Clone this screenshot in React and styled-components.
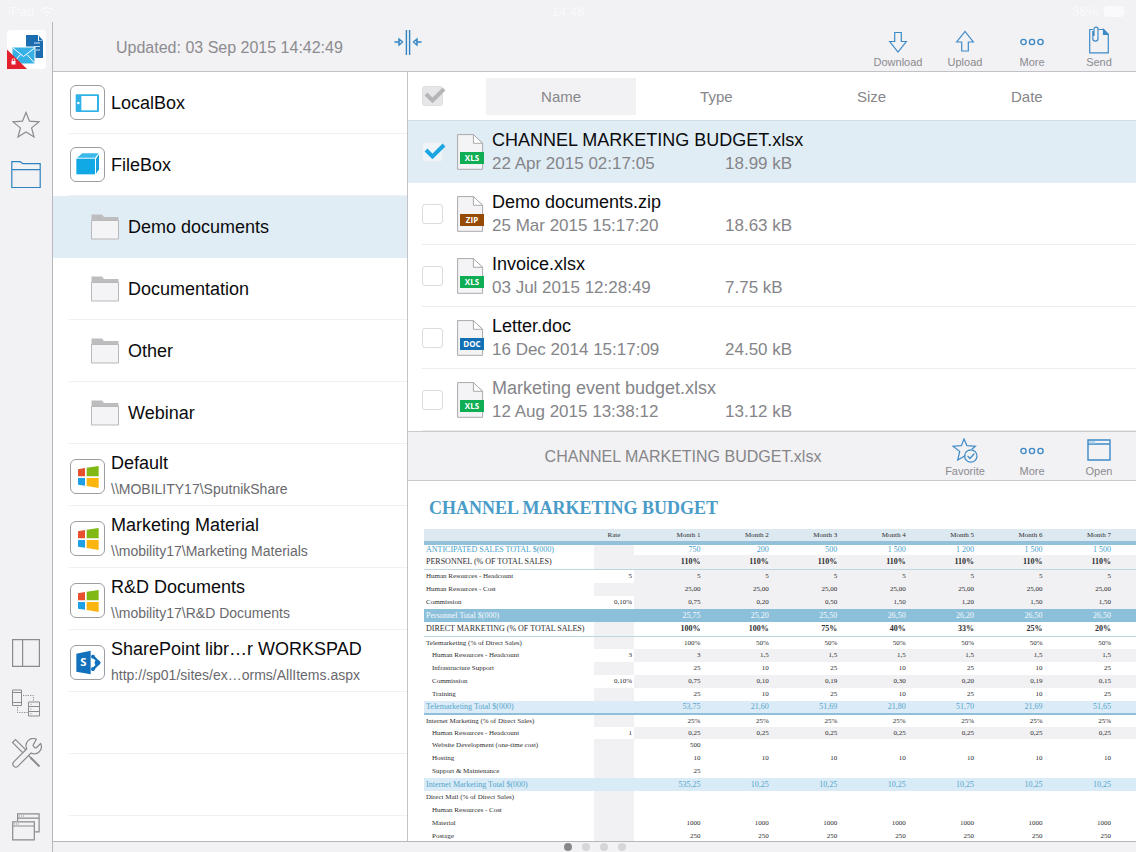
import React, { useState } from "react";
import styled, { createGlobalStyle } from "styled-components";

const GlobalStyle = createGlobalStyle`
  * {
    box-sizing: border-box;
  }
  body {
    margin: 0;
    background: #f2f1f4;
    color: #0b0b0d;
    font-family: "Liberation Sans", Arial, sans-serif;
  }
  button {
    margin: 0;
    padding: 0;
    border: none;
    background: none;
    color: inherit;
    font: inherit;
    cursor: pointer;
  }
  svg {
    display: block;
    flex: none;
  }
`;

// page frame
const Page = styled.div`
  display: flex;
  flex-direction: column;
  height: 100vh;
  overflow: hidden;
  background: #f2f1f4;
`;

const StatusBar = styled.div`
  display: grid;
  grid-template-columns: 1fr auto 1fr;
  align-items: center;
  flex: none;
  height: 22px;
  padding: 0 8px;
  color: #faf9fc;
  font-size: 13px;
`;

const StatusSide = styled.div`
  display: flex;
  align-items: center;
  gap: 6px;
  justify-content: ${(props) => props.$align || "flex-start"};
`;

const Body = styled.div`
  display: flex;
  flex: 1;
  min-height: 0;
`;

// left rail
const Rail = styled.nav`
  display: flex;
  flex-direction: column;
  align-items: center;
  flex: none;
  width: 53px;
  padding-top: 8px;
  border-right: 1px solid #b7b6ba;
`;

const LogoBox = styled.a`
  display: block;
  margin: 0 0 31px;
`;

const RailButton = styled.button`
  display: flex;
  align-items: center;
  justify-content: center;
  width: 52px;
  height: 50px;
  color: ${(props) => (props.$active ? "#2f83c0" : "#8b8b8f")};
`;

const RailBottom = styled.div`
  display: flex;
  flex-direction: column;
  margin-top: auto;
  & > :last-child {
    margin-top: 24px;
  }
`;

const Main = styled.main`
  display: flex;
  flex-direction: column;
  flex: 1;
  min-width: 0;
`;

// toolbar over both panels
const Toolbar = styled.header`
  display: flex;
  align-items: center;
  flex: none;
  height: 50px;
  padding-right: 4px;
  border-bottom: 1px solid #c3c2c6;
`;

const Updated = styled.p`
  width: 341px;
  margin: 0;
  padding: 2px 0 0 63px;
  color: #8c8c90;
  font-size: 16px;
`;

const SplitButton = styled.button`
  margin-bottom: 8px;
  color: #2f83c0;
`;

const Tools = styled.div`
  display: flex;
  gap: 1px;
  margin-left: auto;
`;

const ToolButton = styled.button`
  display: flex;
  flex-direction: column;
  align-items: center;
  justify-content: flex-end;
  gap: 2px;
  width: 66px;
  height: 42px;
  color: #8b8b8f;
  font-size: 11px;
  line-height: 12px;
  svg {
    color: #3e8ac6;
  }
`;

const Panels = styled.div`
  display: flex;
  flex: 1;
  min-height: 0;
  background: #fff;
`;

// folder list
const FolderList = styled.ul`
  flex: none;
  width: 355px;
  margin: 0;
  padding: 0;
  overflow: hidden;
  list-style: none;
  border-right: 1px solid #c3c2c6;
`;

const FolderRow = styled.li`
  height: 62px;
  padding-left: 16px;
  background: ${(props) => (props.$selected ? "#e1edf5" : "transparent")};
`;

const FolderButton = styled.button`
  display: flex;
  align-items: center;
  gap: ${(props) => (props.$nested ? "9px" : "6px")};
  width: 100%;
  height: 62px;
  padding-top: ${(props) => (props.$tall ? "3px" : "0")};
  padding-left: ${(props) => (props.$nested ? "22px" : "1px")};
  border-bottom: 1px solid ${(props) => (props.$selected ? "#e1edf5" : "#f0f0f3")};
  text-align: left;
`;

const EmptyRow = styled.div`
  height: 62px;
  border-bottom: 1px solid #f0f0f3;
`;

const SourceIcon = styled.span`
  width: 35px;
  height: 35px;
  border: 1px solid #9d9da1;
  border-radius: 6px;
  background: #fff;
`;

const FolderText = styled.span`
  display: flex;
  flex-direction: column;
  gap: 2px;
  font-size: 18px;
  line-height: 24px;
  small {
    color: #69696d;
    font-size: 14px;
  }
`;

// file list
const Content = styled.div`
  display: flex;
  flex-direction: column;
  flex: 1;
  min-width: 0;
`;

const SortBar = styled.div`
  display: flex;
  align-items: center;
  flex: none;
  height: 49px;
  padding: 0 34px 0 14px;
  border-bottom: 1px solid #cfdfe8;
`;

const SortTabs = styled.div`
  display: flex;
  flex: 1;
  gap: 5px;
  margin-left: 43px;
`;

const SortTab = styled.button`
  flex: 1;
  height: 37px;
  background: ${(props) => (props.$active ? "#f2f1f3" : "transparent")};
  color: #868689;
  font-size: 15px;
`;

const CheckLabel = styled.label`
  position: relative;
  display: block;
  flex: none;
  width: 21px;
  height: 20px;
  svg {
    position: absolute;
    top: 0;
    left: 2px;
    pointer-events: none;
  }
`;

const CheckInput = styled.input`
  appearance: none;
  display: block;
  width: 21px;
  height: 20px;
  margin: 0;
  border: 1px solid ${(props) => (props.$all ? "#dfdfe1" : "#dcdce0")};
  border-radius: 3px;
  background: ${(props) => (props.$all ? "#e6e6e8" : "#fff")};
  &:checked {
    border-color: #e6eef4;
    background: ${(props) => (props.$all ? "#e6e6e8" : "#eef4f8")};
  }
`;

const FileList = styled.ul`
  flex: none;
  margin: 0;
  padding: 0;
  list-style: none;
`;

const FileRow = styled.li`
  height: 62px;
  padding-left: 14px;
  background: ${(props) => (props.$selected ? "#e1edf5" : "transparent")};
`;

const FileInner = styled.div`
  display: flex;
  align-items: center;
  height: 62px;
  border-bottom: 1px solid ${(props) => (props.$selected ? "#e1edf5" : "#ededf0")};
  & > svg {
    margin: 0 7px 0 14px;
  }
`;

const FileText = styled.div`
  flex: 1;
  min-width: 0;
  line-height: 24px;
`;

const FileName = styled.div`
  color: ${(props) => (props.$dim ? "#858589" : "inherit")};
  font-size: 18px;
`;

const FileMeta = styled.div`
  display: grid;
  grid-template-columns: 233px 1fr;
  color: #858589;
  font-size: 17px;
`;

// preview panel
const PreviewBar = styled.div`
  display: flex;
  align-items: center;
  flex: none;
  height: 50px;
  padding-right: 4px;
  border-top: 1px solid #cbcacf;
  border-bottom: 1px solid #c9c8cc;
  background: #f2f1f4;
`;

const PreviewTitle = styled.h2`
  flex: 1;
  margin: 0;
  padding: 2px 0 0 26px;
  color: #868689;
  font-size: 16px;
  font-weight: 400;
  text-align: center;
`;

const SheetArea = styled.section`
  flex: 1;
  min-height: 0;
  padding: 16px 0 0 16px;
  overflow: hidden;
  font-family: "Liberation Serif", "Times New Roman", serif;
`;

const SheetTitle = styled.h1`
  margin: 0 0 10px 5px;
  color: #4a9cc8;
  font-size: 18px;
  line-height: 22px;
`;

const Sheet = styled.table`
  width: 100%;
  border-collapse: separate;
  border-spacing: 0;
  table-layout: fixed;
  color: #2d2d30;
  font-size: 7px;
  line-height: 8px;
`;

const LabelCol = styled.col`
  width: 170px;
`;
const RateCol = styled.col`
  width: 40px;
`;
const EdgeCol = styled.col`
  width: 23px;
`;

const rowKinds = {
  head: { height: 16, fill: "#dce9f0", line: "4px solid #93c1da" },
  sales: { height: 10, color: "#45a0cb", size: 8 },
  section: { height: 15, line: "1px solid #bcd6e2", size: 8 },
  plain: { height: 13 },
  tight: { height: 12 },
  total: { height: 13, fill: "#8cc0da", color: "#f4fafd", size: 8 },
  subtotal: { height: 14, fill: "#dbebf7", color: "#55a6cc", line: "2px solid #8fbfd9", size: 8 },
  soft: { height: 13, fill: "#d9ebf6", color: "#55a6cc", size: 8 },
};

const SheetRow = styled.tr`
  height: ${(props) => rowKinds[props.$kind].height}px;
  color: ${(props) => rowKinds[props.$kind].color || "inherit"};
  font-size: ${(props) => rowKinds[props.$kind].size || 7}px;
  th,
  td {
    padding: 0 2px ${(props) => (props.$kind === "plain" ? 2 : 0)}px;
    border-bottom: ${(props) => rowKinds[props.$kind].line || "none"};
    background: ${(props) => rowKinds[props.$kind].fill || "transparent"};
    font-weight: 400;
    text-align: right;
    white-space: nowrap;
  }
  th:first-child {
    padding-left: ${(props) => (props.$indent ? 8 : 2)}px;
    text-align: left;
  }
`;

const Cell = styled.td`
  && {
    ${(props) => props.$shade && "background: #f1f0f2;"}
    ${(props) => props.$bold && "font-weight: 700;"}
  }
`;

const RateHead = styled.th`
  && {
    text-align: center;
  }
`;

const Footer = styled.footer`
  display: flex;
  align-items: center;
  justify-content: center;
  gap: 10px;
  flex: none;
  height: 11px;
  border-top: 1px solid #b7b6ba;
`;

const Dot = styled.span`
  width: 8px;
  height: 8px;
  border-radius: 50%;
  background: ${(props) => (props.$active ? "#87868a" : "#d6d5d9")};
`;

// icons
const Line = ({ w, h, children, sw = 1.2 }) => (
  <svg
    width={w}
    height={h}
    viewBox={`0 0 ${w} ${h}`}
    fill="none"
    stroke="currentColor"
    strokeWidth={sw}
    aria-hidden="true"
  >
    {children}
  </svg>
);

const Logo = () => (
  <svg width="39" height="39" viewBox="0 0 39 39" aria-hidden="true">
    <rect width="39" height="39" rx="4" fill="#fff" />
    <path d="M19 5h12l5 6v17H19z" fill="#1c6db0" />
    <path d="M31 5v6h5z" fill="#fff" />
    <path d="M32 6l4 4.500h-4z" fill="#1c6db0" />
    <path d="M27 13h6M27 16.500h6M29 20h4" stroke="#cfe3f2" strokeWidth="1" />
    <path d="M5 17h23v17H5z" fill="#35b1e6" stroke="#fff" strokeWidth="1" />
    <path d="M6 18l10.500 8.500L27.500 18M6 33l7.500-8.500M27.500 33L20 24.500" stroke="#fff" fill="none" />
    <path d="M0 19.500L20 39H0z" fill="#e3202e" />
    <rect x="4.500" y="31" width="4" height="3.500" fill="#fff" />
    <path d="M5.200 31v-1a1.300 1.300 0 0 1 2.600 0v1" stroke="#fff" strokeWidth=".8" fill="none" />
  </svg>
);

const StarIcon = () => (
  <Line w={28} h={28}>
    <path d="M14 1.500l3.500 8.700 9.500.7-7.400 6 2.400 9.100-8-5-8 5 2.400-9.100-7.400-6 9.500-.7z" />
  </Line>
);

const FolderIcon = () => (
  <Line w={30} h={28}>
    <path d="M.8 26.500V.7h8.400l2.600 2h17.400v23.800zM.8 8.700h28.400" />
  </Line>
);

const ColumnsIcon = () => (
  <Line w={28} h={28}>
    <path d="M.6.600h26.800v26.800H.6zM10.600.600v26.800" />
  </Line>
);

const DevicesIcon = () => (
  <Line w={28} h={28} sw={1}>
    <path d="M.5 1h9v15.500h-9zM.5 3.500h9M.5 13.500h9" />
    <path d="M16.500 13h11v14h-11zM16.500 17.500h11M16.500 22.500h11" />
    <path d="M18.500 15.300h1M18.500 20h1M18.500 24.800h1" />
    <path d="M11 6.500h10.500V12M5.500 18v5.500h10" strokeDasharray="1.200 1.200" />
  </Line>
);

const ToolsIcon = () => (
  <Line w={31} h={31} sw={1.2}>
    <path d="M1.500 4.500l3-3L16 13l-3 3z" />
    <path d="M17 17l5 5" />
    <path d="M19.500 19.500l9 9" strokeWidth="2" />
    <path
      transform="translate(-2.600 -2.600) scale(1.420)"
      strokeWidth=".85"
      fill="#f2f1f4"
      d="M17.700 6.300a1 1 0 0 0 0 1.400l.8.8a1 1 0 0 0 1.400 0l2.770-2.770a5 5 0 0 1-6.700 6.700l-9.200 9.200a2.120 2.120 0 0 1-3-3l9.200-9.200a5 5 0 0 1 6.700-6.700z"
    />
  </Line>
);

const WindowsIcon = () => (
  <Line w={28} h={28}>
    <path d="M5.600 8V.8h21.500v18H23M5.600 5.200h21.500" />
    <path d="M.7 8.800h21.600v18H.7zM.7 13h21.600" />
    <path d="M7 3h6M2 11h6" strokeDasharray="1 1" />
  </Line>
);

const SplitIcon = () => (
  <Line w={28} h={25} sw={1.4}>
    <path d="M12.400 0v25M15.600 0v25" />
    <path d="M.5 12h4M5 9l3.500 3L5 15zM27.500 12h-4M23 9l-3.500 3 3.500 3z" />
  </Line>
);

const DownloadIcon = () => (
  <Line w={20} h={24}>
    <path d="M6.700 2.500h6.600v9h5L10 22 1.700 11.500h5z" />
  </Line>
);

const UploadIcon = () => (
  <Line w={20} h={24}>
    <path d="M6.700 21h6.600v-9h5L10 1.500 1.700 12h5z" />
  </Line>
);

const MoreIcon = () => (
  <Line w={24} h={24} sw={1.400}>
    <circle cx="3.500" cy="12" r="2.600" />
    <circle cx="12" cy="12" r="2.600" />
    <circle cx="20.500" cy="12" r="2.600" />
  </Line>
);

const SendIcon = () => (
  <Line w={20} h={28}>
    <path d="M4 3.500H.7v23.400h18.600V8.500L14.500 3.500H9.500" />
    <path d="M14.500 3.500v5h4.800z" fill="currentColor" />
    <path d="M3.800 5v7.500a2.600 2.600 0 0 0 5.200 0V3.200a2 2 0 0 0-4-.2v7" />
  </Line>
);

const FavoriteIcon = () => (
  <Line w={26} h={25}>
    <path d="M13.500 17.500L5.700 22l2-8.600L1 8.200l8.400-.6L12 1l2.900 6.600 8.400.6-3.500 3" />
    <circle cx="18.800" cy="18" r="6.200" />
    <path d="M15.600 18l2.400 2.500 4.400-5" />
  </Line>
);

const OpenIcon = () => (
  <Line w={24} h={24} sw={1.400}>
    <path d="M1 1h22v20H1zM1 5h22" />
    <path d="M2 2h6v2.400H2z" fill="#b9d6ec" stroke="none" />
  </Line>
);

const CheckMark = ({ color }) => (
  <svg width="22" height="18" viewBox="0 0 22 18" aria-hidden="true">
    <path d="M2 8l6.500 6.500L20 3" fill="none" stroke={color} strokeWidth="4" />
  </svg>
);

const SmallFolder = () => (
  <svg width="28" height="26" viewBox="0 0 28 26" aria-hidden="true">
    <path d="M.5 25V.5h10.500l2 2.500h14.500v22z" fill="#bdbdbf" />
    <path d="M.5 6.500h27v18.500H.5z" fill="#f4f3f5" stroke="#b9b9bb" />
  </svg>
);

const badgeColors = { XLS: "#0fae54", ZIP: "#954a05", DOC: "#1470b4" };

const FileIcon = ({ type }) => (
  <svg width="28" height="36" viewBox="0 0 28 36" role="img" aria-label={type}>
    <path d="M.6.600h15.800l9.200 8.700v26H.6z" fill="#f4f4f6" stroke="#a9a9ad" />
    <path d="M16.400.600v8.700h9.200z" fill="#fff" stroke="#a9a9ad" />
    <rect x="3" y="18" width="24" height="12" fill={badgeColors[type]} />
    <text
      x="15"
      y="27"
      fill="#fff"
      fontFamily="Open Sans, sans-serif"
      fontSize="8"
      fontWeight="700"
      textAnchor="middle"
    >
      {type}
    </text>
  </svg>
);

const SourceArt = ({ kind }) => (
  <svg width="33" height="33" viewBox="3 3 99 99" aria-hidden="true">
    {kind === "tablet" && (
      <>
        <rect x="17" y="28" width="70" height="53" rx="3" fill="#2fb3e6" />
        <rect x="34" y="33" width="47" height="43" fill="#fff" />
        <circle cx="25" cy="54" r="4" fill="#fff" />
      </>
    )}
    {kind === "cube" && (
      <>
        <path d="M19 35h56v47H19z" fill="#10a9e6" />
        <path d="M21 32l16-13h49L75 32z" fill="#3bb9ea" />
        <path d="M78 35l9-13v45l-9 13z" fill="#1aa0dc" />
      </>
    )}
    {kind === "windows" && (
      <>
        <path d="M24 31l21-4v25H24z" fill="#e8502d" />
        <path d="M50 26l36-5v31H50z" fill="#80b816" />
        <path d="M24 57h21v23l-21-3z" fill="#1f9fe4" />
        <path d="M50 57h36v30l-36-6z" fill="#fbb50f" />
      </>
    )}
    {kind === "sharepoint" && (
      <>
        <path d="M66 31l22 22-22 23" fill="none" stroke="#1370bc" strokeWidth="7" />
        <circle cx="69" cy="35" r="6" fill="#1370bc" />
        <circle cx="69" cy="72" r="6" fill="#1370bc" />
        <circle cx="82" cy="53" r="8" fill="#1370bc" />
        <path d="M19 26l43-9v71l-43-8z" fill="#1370bc" />
        <text x="40" y="64" fill="#fff" fontFamily="Open Sans, sans-serif" fontSize="34" fontWeight="700" textAnchor="middle">
          S
        </text>
      </>
    )}
  </svg>
);

const folders = [
  { name: "LocalBox", icon: "tablet" },
  { name: "FileBox", icon: "cube" },
  { name: "Demo documents", nested: true },
  { name: "Documentation", nested: true },
  { name: "Other", nested: true },
  { name: "Webinar", nested: true },
  { name: "Default", path: "\\\\MOBILITY17\\SputnikShare", icon: "windows" },
  { name: "Marketing Material", path: "\\\\mobility17\\Marketing Materials", icon: "windows" },
  { name: "R&D Documents", path: "\\\\mobility17\\R&D Documents", icon: "windows" },
  { name: "SharePoint libr…r WORKSPAD", path: "http://sp01/sites/ex…orms/AllItems.aspx", icon: "sharepoint" },
];

const files = [
  { name: "CHANNEL MARKETING BUDGET.xlsx", date: "22 Apr 2015 02:17:05", size: "18.99 kB", type: "XLS" },
  { name: "Demo documents.zip", date: "25 Mar 2015 15:17:20", size: "18.63 kB", type: "ZIP" },
  { name: "Invoice.xlsx", date: "03 Jul 2015 12:28:49", size: "7.75 kB", type: "XLS" },
  { name: "Letter.doc", date: "16 Dec 2014 15:17:09", size: "24.50 kB", type: "DOC" },
  { name: "Marketing event budget.xlsx", date: "12 Aug 2015 13:38:12", size: "13.12 kB", type: "XLS", dim: true },
];

const same = (value) => Array(7).fill(value);

// shade: "r" fills the rate cell, "m" fills the month cells
const sheetRows = [
  { kind: "sales", label: "ANTICIPATED SALES TOTAL $(000)", shade: "r", months: ["750", "200", "500", "1 500", "1 200", "1 500", "1 500"] },
  { kind: "section", label: "PERSONNEL (% OF TOTAL SALES)", shade: "rm", bold: true, months: same("110%") },
  { kind: "plain", label: "Human Resources - Headcount", rate: "5", shade: "m", months: same("5") },
  { kind: "plain", label: "Human Resources - Cost", shade: "rm", months: same("25,00") },
  { kind: "plain", label: "Commission", rate: "0,10%", shade: "m", months: ["0,75", "0,20", "0,50", "1,50", "1,20", "1,50", "1,50"] },
  { kind: "total", label: "Personnel Total $(000)", months: ["25,75", "25,20", "25,50", "26,50", "26,20", "26,50", "26,50"] },
  { kind: "section", label: "DIRECT MARKETING (% OF TOTAL SALES)", shade: "r", bold: true, months: ["100%", "100%", "75%", "40%", "33%", "25%", "20%"] },
  { kind: "tight", label: "Telemarketing (% of Direct Sales)", shade: "r", months: ["100%", "50%", "50%", "50%", "50%", "50%", "50%"] },
  { kind: "plain", indent: true, label: "Human Resources - Headcount", rate: "3", shade: "m", months: ["3", "1,5", "1,5", "1,5", "1,5", "1,5", "1,5"] },
  { kind: "plain", indent: true, label: "Infrastructure Support", shade: "r", months: ["25", "10", "25", "10", "25", "10", "25"] },
  { kind: "plain", indent: true, label: "Commission", rate: "0,10%", shade: "m", months: ["0,75", "0,10", "0,19", "0,30", "0,20", "0,19", "0,15"] },
  { kind: "plain", indent: true, label: "Training", shade: "r", months: ["25", "10", "25", "10", "25", "10", "25"] },
  { kind: "subtotal", label: "Telemarketing Total $(000)", months: ["53,75", "21,60", "51,69", "21,80", "51,70", "21,69", "51,65"] },
  { kind: "tight", label: "Internet Marketing (% of Direct Sales)", shade: "r", months: same("25%") },
  { kind: "tight", indent: true, label: "Human Resources - Headcount", rate: "1", shade: "m", months: same("0,25") },
  { kind: "plain", indent: true, label: "Website Development (one-time cost)", shade: "r", months: ["500", "", "", "", "", "", ""] },
  { kind: "plain", indent: true, label: "Hosting", shade: "r", months: same("10") },
  { kind: "plain", indent: true, label: "Support & Maintenance", shade: "r", months: ["25", "", "", "", "", "", ""] },
  { kind: "soft", label: "Internet Marketing Total $(000)", months: ["535,25", "10,25", "10,25", "10,25", "10,25", "10,25", "10,25"] },
  { kind: "plain", label: "Direct Mail (% of Direct Sales)", shade: "r", months: same("") },
  { kind: "plain", indent: true, label: "Human Resources - Cost", shade: "r", months: same("") },
  { kind: "plain", indent: true, label: "Material", shade: "r", months: same("1000") },
  { kind: "plain", indent: true, label: "Postage", shade: "r", months: same("250") },
];

const BudgetSheet = () => (
  <SheetArea>
    <SheetTitle>CHANNEL MARKETING BUDGET</SheetTitle>
    <Sheet>
      <colgroup>
        <LabelCol />
        <RateCol />
        {same(0).map((_, i) => (
          <col key={i} />
        ))}
        <EdgeCol />
      </colgroup>
      <thead>
        <SheetRow $kind="head">
          <th />
          <RateHead>Rate</RateHead>
          {same(0).map((_, i) => (
            <th key={i}>{`Month ${i + 1}`}</th>
          ))}
          <th />
        </SheetRow>
      </thead>
      <tbody>
        {sheetRows.map((row, index) => {
          const shade = row.shade || "";
          return (
            <SheetRow key={index} $kind={row.kind} $indent={row.indent}>
              <th scope="row">{row.label}</th>
              <Cell $shade={shade.includes("r")}>{row.rate}</Cell>
              {row.months.map((value, i) => (
                <Cell key={i} $shade={shade.includes("m")} $bold={row.bold}>
                  {value}
                </Cell>
              ))}
              <Cell $shade={shade.includes("m")} />
            </SheetRow>
          );
        })}
      </tbody>
    </Sheet>
  </SheetArea>
);

const Tick = ({ label, all, checked, onChange }) => (
  <CheckLabel>
    <CheckInput type="checkbox" aria-label={label} $all={all} checked={checked} onChange={onChange} />
    {(checked || all) && <CheckMark color={all ? "#b5b5b8" : "#1ba6e2"} />}
  </CheckLabel>
);

const App = () => {
  const [folder, setFolder] = useState("Demo documents");
  const [sort, setSort] = useState("Name");
  const [checked, setChecked] = useState([files[0].name]);

  const toggle = (name) =>
    setChecked(checked.includes(name) ? checked.filter((n) => n !== name) : [...checked, name]);
  const allChecked = checked.length === files.length;

  return (
    <Page>
      <GlobalStyle />
      <StatusBar>
        <StatusSide>
          <span>iPad</span>
          <Line w={14} h={11} sw={1.6}>
            <path d="M1 4a9 9 0 0 1 12 0M3.500 7a5 5 0 0 1 7 0M6 9.500h2" />
          </Line>
        </StatusSide>
        <span>14:48</span>
        <StatusSide $align="flex-end">
          <span>36%</span>
          <Line w={24} h={11} sw={1}>
            <rect x=".5" y=".5" width="19" height="10" rx="2" fill="currentColor" />
            <path d="M22 4v3" />
          </Line>
        </StatusSide>
      </StatusBar>

      <Body>
        <Rail>
          <LogoBox href="#home" aria-label="Home">
            <Logo />
          </LogoBox>
          <RailButton aria-label="Favorites">
            <StarIcon />
          </RailButton>
          <RailButton aria-label="Files" $active>
            <FolderIcon />
          </RailButton>
          <RailBottom>
            <RailButton aria-label="Layout">
              <ColumnsIcon />
            </RailButton>
            <RailButton aria-label="Sync">
              <DevicesIcon />
            </RailButton>
            <RailButton aria-label="Settings">
              <ToolsIcon />
            </RailButton>
            <RailButton aria-label="Windows">
              <WindowsIcon />
            </RailButton>
          </RailBottom>
        </Rail>

        <Main>
          <Toolbar>
            <Updated>Updated: 03 Sep 2015 14:42:49</Updated>
            <SplitButton aria-label="Resize panels">
              <SplitIcon />
            </SplitButton>
            <Tools>
              <ToolButton>
                <DownloadIcon />
                Download
              </ToolButton>
              <ToolButton>
                <UploadIcon />
                Upload
              </ToolButton>
              <ToolButton>
                <MoreIcon />
                More
              </ToolButton>
              <ToolButton>
                <SendIcon />
                Send
              </ToolButton>
            </Tools>
          </Toolbar>

          <Panels>
            <FolderList>
              {folders.map((item) => {
                const selected = item.name === folder;
                return (
                  <FolderRow key={item.name} $selected={selected}>
                    <FolderButton
                      $nested={item.nested}
                      $tall={item.path}
                      $selected={selected}
                      onClick={() => setFolder(item.name)}
                    >
                      {item.nested ? (
                        <SmallFolder />
                      ) : (
                        <SourceIcon>
                          <SourceArt kind={item.icon} />
                        </SourceIcon>
                      )}
                      <FolderText>
                        {item.name}
                        {item.path && <small>{item.path}</small>}
                      </FolderText>
                    </FolderButton>
                  </FolderRow>
                );
              })}
              {[0, 1].map((n) => (
                <FolderRow key={n}>
                  <EmptyRow />
                </FolderRow>
              ))}
            </FolderList>

            <Content>
              <SortBar>
                <Tick
                  all
                  label="Select all"
                  checked={allChecked}
                  onChange={() => setChecked(allChecked ? [] : files.map((f) => f.name))}
                />
                <SortTabs>
                  {["Name", "Type", "Size", "Date"].map((tab) => (
                    <SortTab key={tab} $active={tab === sort} onClick={() => setSort(tab)}>
                      {tab}
                    </SortTab>
                  ))}
                </SortTabs>
              </SortBar>

              <FileList>
                {files.map((file) => {
                  const selected = checked.includes(file.name);
                  return (
                    <FileRow key={file.name} $selected={selected}>
                      <FileInner $selected={selected}>
                        <Tick label={file.name} checked={selected} onChange={() => toggle(file.name)} />
                        <FileIcon type={file.type} />
                        <FileText>
                          <FileName $dim={file.dim}>{file.name}</FileName>
                          <FileMeta>
                            <span>{file.date}</span>
                            <span>{file.size}</span>
                          </FileMeta>
                        </FileText>
                      </FileInner>
                    </FileRow>
                  );
                })}
              </FileList>

              <PreviewBar>
                <PreviewTitle>CHANNEL MARKETING BUDGET.xlsx</PreviewTitle>
                <Tools>
                  <ToolButton>
                    <FavoriteIcon />
                    Favorite
                  </ToolButton>
                  <ToolButton>
                    <MoreIcon />
                    More
                  </ToolButton>
                  <ToolButton>
                    <OpenIcon />
                    Open
                  </ToolButton>
                </Tools>
              </PreviewBar>
              <BudgetSheet />
            </Content>
          </Panels>

          <Footer>
            {[0, 1, 2, 3].map((n) => (
              <Dot key={n} $active={n === 0} />
            ))}
          </Footer>
        </Main>
      </Body>
    </Page>
  );
};

export default App;
